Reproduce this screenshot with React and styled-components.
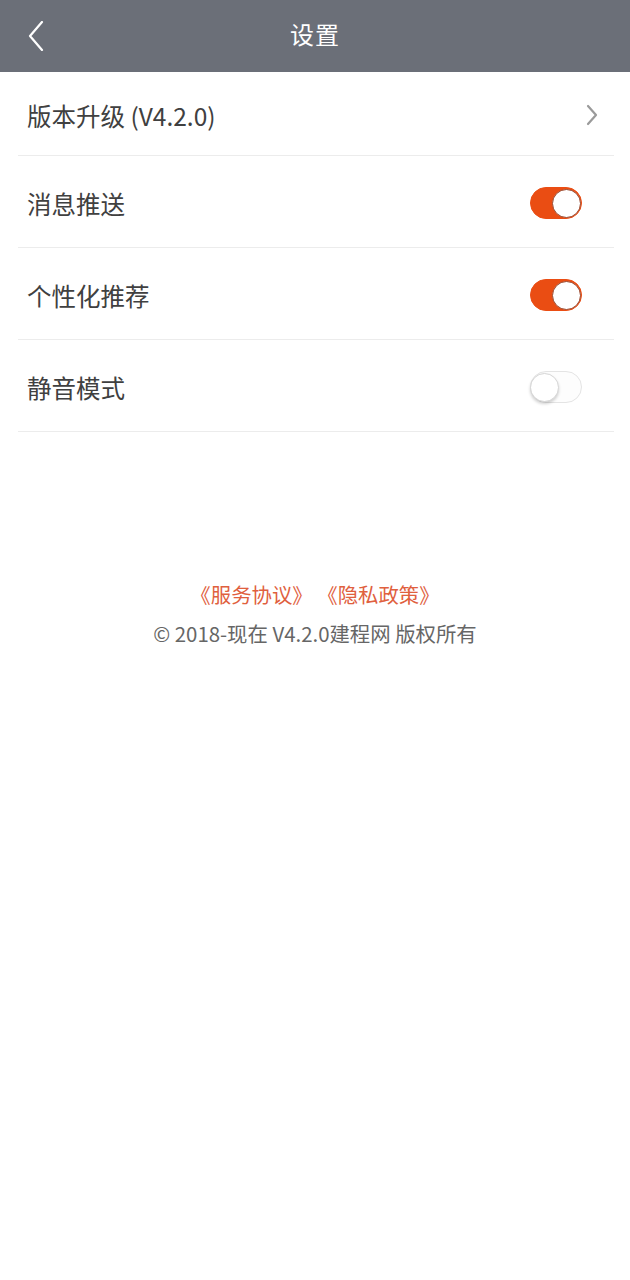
import React, { useState } from "react";
import styled, { createGlobalStyle } from "styled-components";

const GlobalStyle = createGlobalStyle`
  html, body {
    margin: 0;
    padding: 0;
    background: #ffffff;
    font-family: "Noto Sans CJK SC", "Noto Sans", sans-serif;
  }
`;

const Page = styled.div`
  width: 630px;
  min-height: 1280px;
  background: #ffffff;
`;

const Header = styled.div`
  height: 72px;
  background-color: #6b6f78;
  display: flex;
  align-items: center;
  justify-content: center;
  position: relative;
`;

const BackBtn = styled.button`
  all: unset;
  position: absolute;
  left: 20px;
  top: 20px;
  width: 32px;
  height: 32px;
  display: flex;
  align-items: center;
  justify-content: center;
  cursor: pointer;
`;

const Title = styled.span`
  font-size: 24px;
  line-height: 24px;
  margin-top: -4px;
  color: #ffffff;
  letter-spacing: 1px;
`;

const List = styled.div`
  margin: 0 16px 0 18px;
`;

const Row = styled.div`
  box-sizing: border-box;
  height: ${props => props.height}px;
  display: flex;
  align-items: center;
  justify-content: space-between;
  padding: 3px 32px 0 9px;
  border-bottom: 1px solid #ececec;
`;

const Label = styled.span`
  font-size: 24.5px;
  color: #404040;
`;

const Track = styled.button`
  all: unset;
  box-sizing: border-box;
  width: 52px;
  height: 32px;
  border-radius: 16px;
  position: relative;
  cursor: pointer;
  background-color: ${props => (props.on ? "#ea4d13" : "#fdfdfd")};
  border: 1px solid ${props => (props.on ? "#ea4d13" : "#e4e4e4")};
`;

const Knob = styled.span`
  position: absolute;
  top: 1px;
  left: ${props => (props.on ? "21px" : "-1px")};
  width: 29px;
  height: 29px;
  border-radius: 50%;
  background: #ffffff;
  box-sizing: border-box;
  border: 1px solid ${props => (props.on ? "#9a4a30" : "#d6d6d6")};
  box-shadow: ${props => (props.on ? "none" : "0 2px 3px rgba(0,0,0,0.18)")};
`;

const Footer = styled.div`
  padding-top: 143px;
  display: flex;
  flex-direction: column;
  align-items: center;
  line-height: 39px;
  font-size: 20.4px;
`;

const Links = styled.div`
  color: #e0603e;
  white-space: pre;
`;

const Copyright = styled.div`
  color: #666666;
`;

const Toggle = ({ initial }) => {
  const [on, setOn] = useState(initial);
  return (
    <Track on={on ? 1 : 0} onClick={() => setOn(!on)}>
      <Knob on={on ? 1 : 0} />
    </Track>
  );
};

const App = () => {
  return (
    <Page>
      <GlobalStyle />
      <Header>
        <BackBtn>
          <svg width="22" height="30" viewBox="0 0 22 30">
            <path
              d="M17 1 L5 15 L17 29"
              fill="none"
              stroke="#ffffff"
              strokeWidth="2.2"
              strokeLinecap="round"
              strokeLinejoin="round"
            />
          </svg>
        </BackBtn>
        <Title>设置</Title>
      </Header>
      <List>
        <Row height={84}>
          <Label>版本升级 (V4.2.0)</Label>
          <svg width="14" height="22" viewBox="0 0 14 22" style={{ marginRight: -17 }}>
            <path
              d="M3 2 L11 11 L3 20"
              fill="none"
              stroke="#9a9a9a"
              strokeWidth="2.2"
              strokeLinecap="round"
              strokeLinejoin="round"
            />
          </svg>
        </Row>
        <Row height={92}>
          <Label>消息推送</Label>
          <Toggle initial={true} />
        </Row>
        <Row height={92}>
          <Label>个性化推荐</Label>
          <Toggle initial={true} />
        </Row>
        <Row height={92}>
          <Label>静音模式</Label>
          <Toggle initial={false} />
        </Row>
      </List>
      <Footer>
        <Links>《服务协议》 《隐私政策》</Links>
        <Copyright>© 2018-现在 V4.2.0建程网 版权所有</Copyright>
      </Footer>
    </Page>
  );
};

export default App;
